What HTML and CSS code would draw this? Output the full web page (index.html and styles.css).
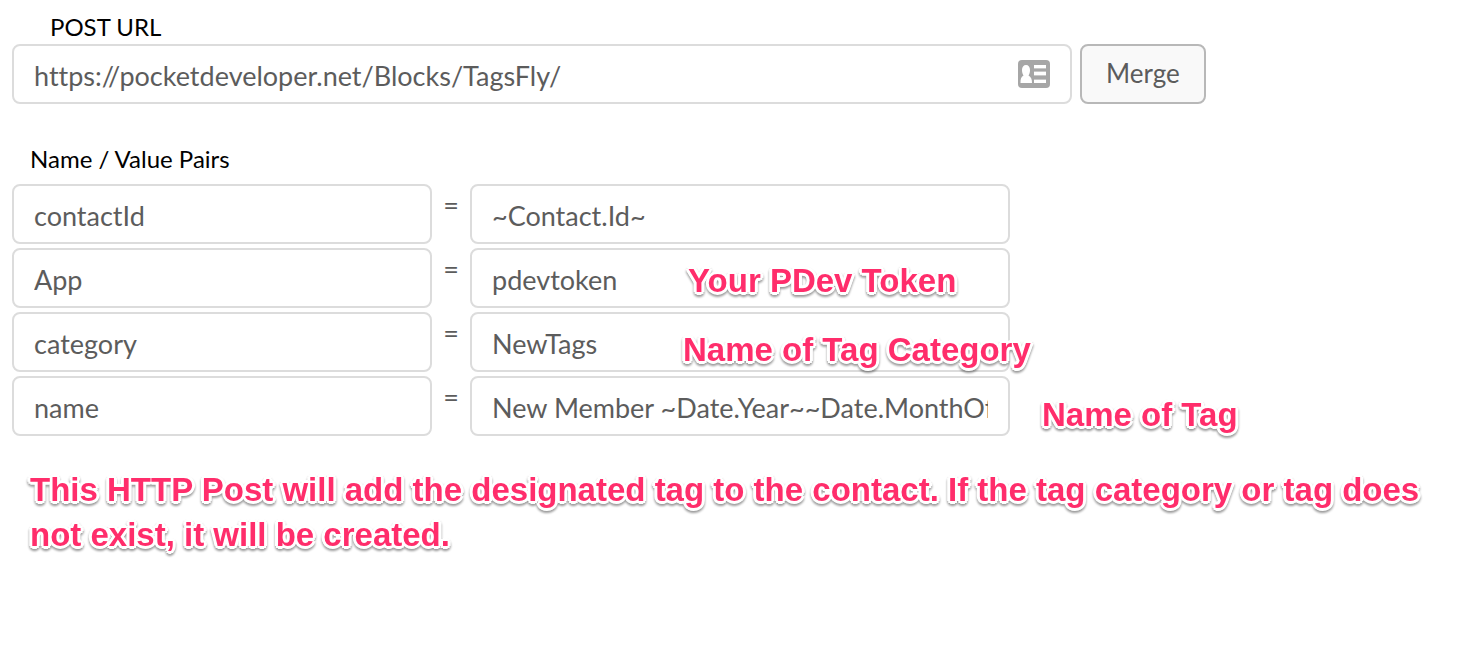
FILE: index.html
```
<!DOCTYPE html>
<html lang="en">
<head>
    <meta charset="UTF-8">
    <meta name="viewport" content="width=device-width, initial-scale=1.0">
    <title>HTTP Post</title>

    <link rel="stylesheet" href="styles.css">
</head>
<body>
    <form class="container">
        <label class="label url-label" for="url">POST URL</label>
        <div class="url-row">
            <div class="url-box">
                <input type="text" class="field" id="url" value="https://pocketdeveloper.net/Blocks/TagsFly/">
                <svg class="card-icon" viewBox="0 0 32 28" aria-hidden="true">
                    <rect width="32" height="28" rx="4" fill="#a6a6a6"/>
                    <path d="M2.500 23c0-4 .5-6 3-7.500C4.500 14 4 12 4 10c0-3 1.500-5 4-5s4 2 4 5c0 2-.5 4-1.500 5.500 2.500 1.500 3.500 3.500 3.500 7.500z" fill="#fff"/>
                    <path d="M16 5h12v3H16zM16 12h12v3H16zM16 20h12v3H16z" fill="#fff"/>
                    <path d="M16 8h12v1H16zM16 11h12v1H16zM16 15h12v1H16zM16 19h12v1H16z" fill="#c8c8c8"/>
                </svg>
            </div>
            <button type="button" class="btn">Merge</button>
        </div>

        <h2 class="label pairs-label">Name / Value Pairs</h2>
        <div class="pairs">
            <div class="pair">
                <input type="text" class="field name" aria-label="Name 1" value="contactId">
                <span class="equals">=</span>
                <div class="value">
                    <input type="text" class="field" aria-label="Value 1" value="~Contact.Id~">
                </div>
            </div>
            <div class="pair">
                <input type="text" class="field name" aria-label="Name 2" value="App">
                <span class="equals">=</span>
                <div class="value">
                    <input type="text" class="field" aria-label="Value 2" value="pdevtoken">
                    <span class="note over token-note">Your PDev Token</span>
                </div>
            </div>
            <div class="pair">
                <input type="text" class="field name" aria-label="Name 3" value="category">
                <span class="equals">=</span>
                <div class="value">
                    <input type="text" class="field" aria-label="Value 3" value="NewTags">
                    <span class="note over category-note">Name of Tag Category</span>
                </div>
            </div>
            <div class="pair">
                <input type="text" class="field name" aria-label="Name 4" value="name">
                <span class="equals">=</span>
                <div class="value">
                    <input type="text" class="field" aria-label="Value 4" value="New Member ~Date.Year~~Date.MonthOfYear~">
                </div>
                <span class="note tag-note">Name of Tag</span>
            </div>
        </div>
    </form>

    <p class="note summary">This HTTP Post will add the designated tag to the contact. If the tag category or tag does not exist, it will be created.</p>
</body>
</html>
```
FILE: styles.css
```
*{
    margin: 0;
    padding: 0;
    box-sizing: border-box;
}

body{
    background-color: white;
    color: #5c5c5c;
    font-family: Lato, "Liberation Sans", sans-serif;
    font-variant-ligatures: none;
    padding: 12px;
}

.label{
    display: block;
    color: black;
    font-size: 24px;
    font-weight: 400;
    line-height: 30px;
    padding-bottom: 2px;
}

.url-label{
    padding-left: 38px;
}

.pairs-label{
    padding-left: 18px;
    margin-top: 40px;
    margin-bottom: 8px;
}

.url-row{
    display: flex;
    gap: 8px;
}

.url-box{
    position: relative;
    flex: 0 1 1060px;
}

.field{
    display: block;
    width: 100%;
    height: 60px;
    padding: 2px 20px 0;
    border: 2px solid #dcdcdc;
    border-radius: 8px;
    outline: none;
    background-color: white;
    color: #5c5c5c;
    font-family: inherit;
    font-size: 27px;
    font-variant-ligatures: none;
}

.card-icon{
    position: absolute;
    top: 16px;
    right: 22px;
    width: 32px;
    height: 28px;
}

.btn{
    height: 60px;
    padding: 0 24px 2px;
    border: 2px solid #b8b8b8;
    border-radius: 8px;
    background-color: #f9f9f9;
    color: #5c5c5c;
    font-family: inherit;
    font-size: 26px;
    cursor: pointer;
}

.pairs{
    display: flex;
    flex-direction: column;
    gap: 4px;
}

.pair{
    display: flex;
}

.name{
    flex: 0 1 420px;
    min-width: 0;
}

.equals{
    width: 38px;
    font-size: 27px;
    line-height: 42px;
    text-align: center;
}

.value{
    position: relative;
    flex: 0 1 540px;
}

/* pink callouts with a white edge and a soft shadow below */
.note{
    color: #ff2d6b;
    font-family: "Liberation Sans", Arial, sans-serif;
    font-size: 33px;
    font-weight: 700;
    line-height: 45px;
    white-space: nowrap;
    text-shadow: 3px 0 white, -3px 0 white, 0 3px white, 0 -3px white,
        2px 2px white, -2px 2px white, 2px -2px white, -2px -2px white;
    filter: drop-shadow(0 2px 1px rgba(0, 0, 0, 0.4));
}

.over{
    position: absolute;
}

.token-note{
    top: 10px;
    left: 218px;
}

.category-note{
    top: 15px;
    left: 213px;
}

.tag-note{
    padding-top: 16px;
    margin-left: 32px;
}

.summary{
    padding: 0 18px;
    margin-top: 30px;
    white-space: normal;
}
```
